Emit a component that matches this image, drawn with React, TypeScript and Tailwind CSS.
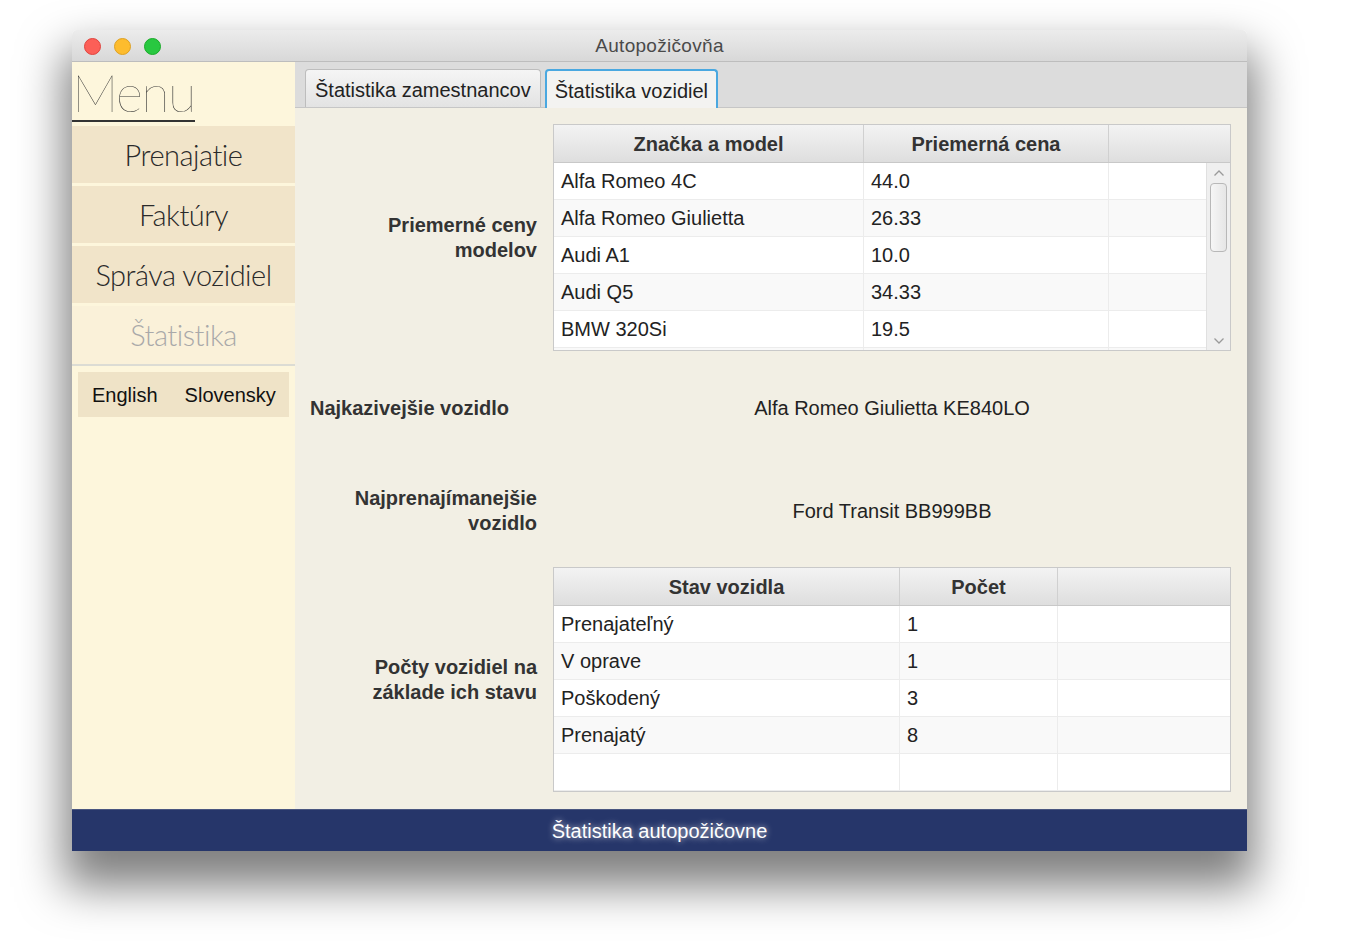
import React from "react";

const SANS = "font-['Liberation_Sans',Arial,sans-serif]";
const THIN = "font-['Lato','Open_Sans',sans-serif]";

const modely = [
  ["Alfa Romeo 4C", "44.0"],
  ["Alfa Romeo Giulietta", "26.33"],
  ["Audi A1", "10.0"],
  ["Audi Q5", "34.33"],
  ["BMW 320Si", "19.5"],
];

const stavy = [
  ["Prenajateľný", "1"],
  ["V oprave", "1"],
  ["Poškodený", "3"],
  ["Prenajatý", "8"],
];

function HeaderCell({ children, w, last }: { children?: React.ReactNode; w?: string; last?: boolean }) {
  return (
    <div
      className={`${w ?? "flex-1"} h-full flex items-center justify-center font-bold text-[#333] ${
        last ? "" : "border-r border-[#d0d0d0]"
      }`}
    >
      {children}
    </div>
  );
}

function Row({ cells, widths, odd }: { cells: string[]; widths: string[]; odd: boolean }) {
  return (
    <div className={`flex h-[37px] shrink-0 border-b border-[#ececec] ${odd ? "bg-[#f9f9f9]" : "bg-white"}`}>
      {cells.map((c, i) => (
        <div
          key={i}
          className={`${widths[i]} h-full flex items-center pl-[7px] text-[#222] ${
            i < cells.length - 1 ? "border-r border-[#ececec]" : ""
          }`}
        >
          {c}
        </div>
      ))}
    </div>
  );
}

function ScrollBar() {
  return (
    <div className="w-[24px] h-full bg-[#efefef] border-l border-[#e0e0e0] flex flex-col items-center">
      <svg width="12" height="8" viewBox="0 0 12 8" className="mt-[6px]">
        <path d="M1.5 6.5 L6 2 L10.5 6.5" stroke="#9a9a9a" strokeWidth="1.3" fill="none" />
      </svg>
      <div className="mt-[6px] w-[17px] h-[69px] rounded-[4px] border border-[#b8b8b8] bg-gradient-to-r from-[#f6f6f6] to-[#e6e6e6]" />
      <div className="flex-1" />
      <svg width="12" height="8" viewBox="0 0 12 8" className="mb-[5px]">
        <path d="M1.5 1.5 L6 6 L10.5 1.5" stroke="#9a9a9a" strokeWidth="1.3" fill="none" />
      </svg>
    </div>
  );
}

function Label({ children }: { children: React.ReactNode }) {
  return (
    <div className="w-[258px] pr-[16px] text-right font-bold text-[#333] leading-[25px]">{children}</div>
  );
}

export default function App() {
  return (
    <div className={`w-[1354px] h-[944px] bg-white pt-[30px] pl-[72px] ${SANS}`}>
      <div className="w-[1175px] rounded-t-[5px] shadow-[0_28px_45px_8px_rgba(0,0,0,0.5)] flex flex-col">
        {/* title bar */}
        <div className="h-[32px] rounded-t-[5px] bg-gradient-to-b from-[#ececec] to-[#d8d8d8] border-b border-[#bdbdbd] flex items-center relative">
          <div className="flex items-center gap-[13px] pl-[12px] pt-[1px]">
            <span className="w-[17px] h-[17px] rounded-full bg-[#fc5f57] border border-[#e0443e]" />
            <span className="w-[17px] h-[17px] rounded-full bg-[#fdbc2e] border border-[#dea123]" />
            <span className="w-[17px] h-[17px] rounded-full bg-[#28c840] border border-[#1aab29]" />
          </div>
          <div className="absolute inset-0 flex items-center justify-center text-[19px] tracking-[0.3px] text-[#4a4a4a] pointer-events-none pt-[1px]">
            Autopožičovňa
          </div>
        </div>

        {/* body */}
        <div className="flex h-[747px]">
          {/* sidebar */}
          <div className="w-[223px] bg-[#fdf6dc] flex flex-col">
            <div className="h-[64px] flex items-start">
              <div className={`${THIN} font-thin text-[52px] leading-[52px] text-[#333] mt-[4px] border-b-[2px] border-[#333] pb-[2px] tracking-[-1.5px]`}>
                Menu
              </div>
            </div>
            {["Prenajatie", "Faktúry", "Správa vozidiel"].map((t) => (
              <div
                key={t}
                className={`${THIN} font-light h-[57px] mb-[3px] bg-[#f1e4c9] flex items-center justify-center text-[29px] text-[#2a2a2a] tracking-[-0.5px]`}
              >
                {t}
              </div>
            ))}
            <div className={`${THIN} font-light h-[58px] bg-[#faf1d9] flex items-center justify-center text-[29px] text-[#a9a9a9] tracking-[-0.5px]`}>
              Štatistika
            </div>
            <div className="h-[2px] bg-[#dcdcd4]" />
            <div className="mx-[6px] mt-[6px] h-[45px] bg-[#efe3c7] flex items-center text-[20px] text-[#111]">
              <span className="pl-[14px]">English</span>
              <span className="pl-[27px]">Slovensky</span>
            </div>
          </div>

          {/* main */}
          <div className="flex-1 bg-[#f2efe4] flex flex-col text-[20px]">
            <div className="h-[46px] bg-[#dcdcdc] border-b border-[#c6c6c6] flex items-end pl-[10px] gap-[4px]">
              <div className="h-[38px] px-[9px] pt-[3px] flex items-center rounded-t-[4px] border border-b-0 border-[#bdbdbd] bg-gradient-to-b from-[#f5f5f5] to-[#e3e3e3] text-[#222]">
                Štatistika zamestnancov
              </div>
              <div className="h-[39px] px-[8px] pt-[3px] flex items-center rounded-t-[4px] border-2 border-b-0 border-[#4aa8e0] bg-[#f3f3f1] text-[#222] -mb-[1px]">
                Štatistika vozidiel
              </div>
            </div>

            <div className="pt-[16px] flex flex-col">
              {/* table 1 */}
              <div className="flex items-center h-[227px]">
                <Label>
                  Priemerné ceny
                  <br />
                  modelov
                </Label>
                <div className="w-[678px] h-full border border-[#c9c9c9] bg-white flex flex-col overflow-hidden">
                  <div className="h-[38px] shrink-0 flex bg-gradient-to-b from-[#f3f3f3] to-[#dedede] border-b border-[#c8c8c8]">
                    <HeaderCell w="w-[310px]">Značka a model</HeaderCell>
                    <HeaderCell w="w-[245px]">Priemerná cena</HeaderCell>
                    <HeaderCell last />
                  </div>
                  <div className="flex-1 flex overflow-hidden">
                    <div className="flex-1 flex flex-col">
                      {modely.map((m, i) => (
                        <Row key={i} cells={[m[0], m[1], ""]} widths={["w-[310px]", "w-[245px]", "flex-1"]} odd={i % 2 === 1} />
                      ))}
                      <div className="flex h-[10px] shrink-0 bg-[#f9f9f9]">
                        <div className="w-[310px] border-r border-[#ececec]" />
                        <div className="w-[245px] border-r border-[#ececec]" />
                      </div>
                    </div>
                    <ScrollBar />
                  </div>
                </div>
              </div>

              {/* najkazivejšie */}
              <div className="flex items-center h-[114px]">
                <div className="w-[258px] pl-[15px] font-bold text-[#333]">Najkazivejšie vozidlo</div>
                <div className="w-[678px] text-center text-[#222]">Alfa Romeo Giulietta KE840LO</div>
              </div>

              {/* najprenajímanejšie */}
              <div className="flex items-center h-[92px]">
                <Label>
                  Najprenajímanejšie
                  <br />
                  vozidlo
                </Label>
                <div className="w-[678px] text-center text-[#222]">Ford Transit BB999BB</div>
              </div>

              {/* table 2 */}
              <div className="flex items-center h-[225px] mt-[10px]">
                <Label>
                  Počty vozidiel na
                  <br />
                  základe ich stavu
                </Label>
                <div className="w-[678px] h-full border border-[#c9c9c9] bg-white flex flex-col overflow-hidden">
                  <div className="h-[38px] shrink-0 flex bg-gradient-to-b from-[#f3f3f3] to-[#dedede] border-b border-[#c8c8c8]">
                    <HeaderCell w="w-[346px]">Stav vozidla</HeaderCell>
                    <HeaderCell w="w-[158px]">Počet</HeaderCell>
                    <HeaderCell last />
                  </div>
                  {stavy.map((s, i) => (
                    <Row key={i} cells={[s[0], s[1], ""]} widths={["w-[346px]", "w-[158px]", "flex-1"]} odd={i % 2 === 1} />
                  ))}
                  <Row cells={["", "", ""]} widths={["w-[346px]", "w-[158px]", "flex-1"]} odd={false} />
                  <div className="flex flex-1 bg-[#f9f9f9]">
                    <div className="w-[346px] border-r border-[#ececec]" />
                    <div className="w-[158px] border-r border-[#ececec]" />
                  </div>
                </div>
              </div>
            </div>
          </div>
        </div>

        {/* footer */}
        <div className="h-[42px] bg-[#26366a] border-t border-[#4a5680] flex items-center justify-center text-[20px] text-white [text-shadow:0_0_6px_rgba(255,255,255,0.75)]">
          Štatistika autopožičovne
        </div>
      </div>
    </div>
  );
}
